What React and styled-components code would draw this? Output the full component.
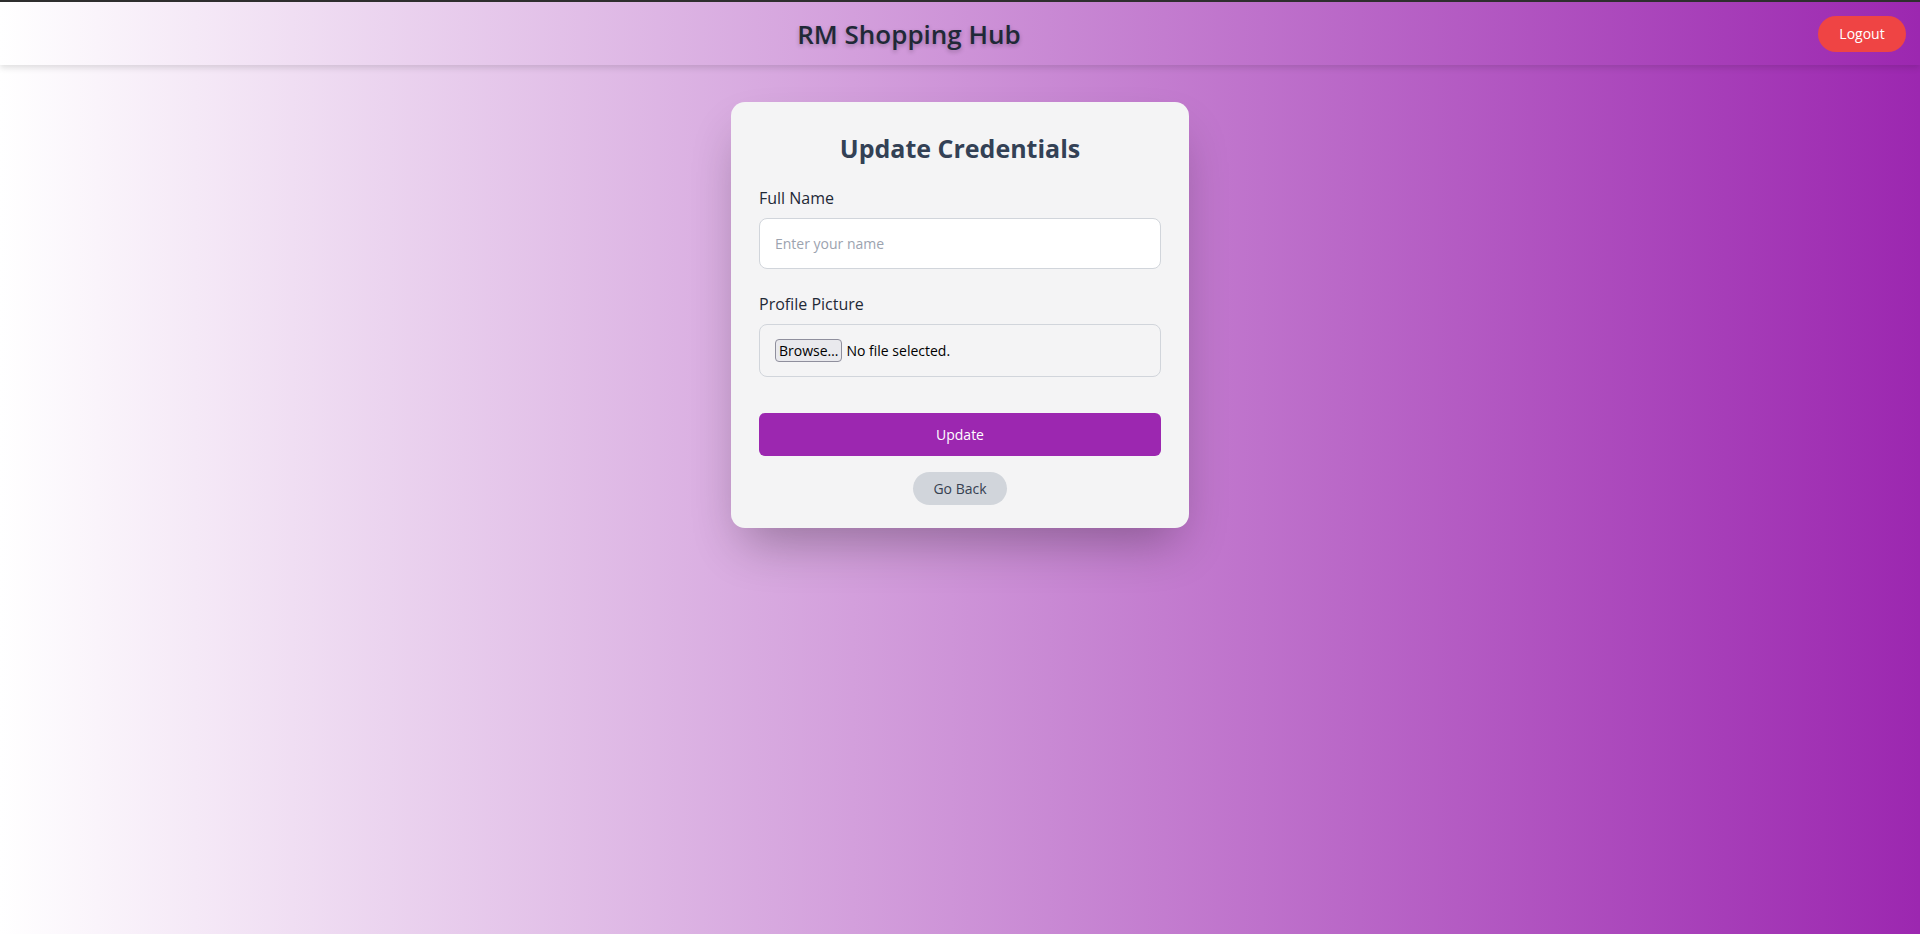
import React from "react";
import styled, { createGlobalStyle } from "styled-components";

const GlobalStyle = createGlobalStyle`
  * { box-sizing: border-box; }
  html, body { margin: 0; padding: 0; }
  body {
    min-height: 100vh;
    background: linear-gradient(to right, #ffffff, #9c27b0);
    font-family: "Open Sans", "Noto Sans", sans-serif;
    border-top: 2px solid #2e2e2e;
  }
`;

const Page = styled.div`
  min-height: calc(100vh - 2px);
  display: flex;
  flex-direction: column;
`;

const Header = styled.header`
  height: 63px;
  display: flex;
  align-items: center;
  padding: 0 14px;
  box-shadow: 0 3px 6px rgba(0, 0, 0, 0.12);
`;

const Brand = styled.h1`
  flex: 1;
  margin: 0;
  padding-right: 14px;
  text-align: center;
  font-size: 26px;
  font-weight: 600;
  color: #1f2937;
  text-shadow: 0 2px 4px rgba(0, 0, 0, 0.25);
`;

const LogoutButton = styled.button`
  width: 88px;
  height: 36px;
  border: none;
  border-radius: 9999px;
  background: #ef4444;
  color: #ffffff;
  font-family: inherit;
  font-size: 14px;
  cursor: pointer;
`;

const Main = styled.main`
  display: flex;
  justify-content: center;
  padding-top: 37px;
`;

const Card = styled.div`
  width: 458px;
  padding: 28px 28px 23px;
  background: #f4f4f5;
  border-radius: 14px;
  box-shadow: 0 25px 50px -12px rgba(0, 0, 0, 0.3);
`;

const Title = styled.h2`
  margin: 0 0 20px;
  text-align: center;
  font-size: 25px;
  line-height: 36px;
  font-weight: 700;
  color: #334155;
`;

const Field = styled.div`
  margin-bottom: ${(p) => p.$gap}px;
`;

const Label = styled.label`
  display: block;
  font-size: 16px;
  line-height: 24px;
  color: #1f2937;
  margin-bottom: 8px;
`;

const TextInput = styled.input`
  display: block;
  width: 100%;
  height: 51px;
  padding: 0 15px;
  border: 1px solid #d1d5db;
  border-radius: 8px;
  background: #ffffff;
  font-family: inherit;
  font-size: 14px;
  color: #1f2937;
  outline: none;
  &::placeholder { color: #9ca3af; }
`;

const FileBox = styled.label`
  display: flex;
  align-items: center;
  gap: 4px;
  height: 53px;
  padding: 0 15px;
  border: 1px solid #d1d5db;
  border-radius: 8px;
  background: #f4f4f5;
  font-size: 14px;
  color: #000000;
  cursor: pointer;
`;

const HiddenFile = styled.input`
  display: none;
`;

const BrowseButton = styled.span`
  display: inline-flex;
  align-items: center;
  justify-content: center;
  height: 23px;
  padding: 0 3px;
  border: 1px solid #8f8f9d;
  border-radius: 4px;
  background: #e9e9ed;
  font-size: 14px;
  color: #000000;
`;

const UpdateButton = styled.button`
  display: block;
  width: 100%;
  height: 43px;
  border: none;
  border-radius: 6px;
  background: #9c27b0;
  color: #ffffff;
  font-family: inherit;
  font-size: 14px;
  cursor: pointer;
`;

const BackRow = styled.div`
  display: flex;
  justify-content: center;
  margin-top: 16px;
`;

const BackButton = styled.button`
  width: 94px;
  height: 33px;
  border: none;
  border-radius: 9999px;
  background: #d1d5db;
  color: #374151;
  font-family: inherit;
  font-size: 14px;
  cursor: pointer;
`;

export default function App() {
  return (
    <>
      <GlobalStyle />
      <Page>
        <Header>
          <Brand>RM Shopping Hub</Brand>
          <LogoutButton>Logout</LogoutButton>
        </Header>
        <Main>
          <Card>
            <Title>Update Credentials</Title>
            <Field $gap={23}>
              <Label htmlFor="name">Full Name</Label>
              <TextInput id="name" type="text" placeholder="Enter your name" />
            </Field>
            <Field $gap={36}>
              <Label>Profile Picture</Label>
              <FileBox>
                <HiddenFile type="file" />
                <BrowseButton>Browse…</BrowseButton>
                No file selected.
              </FileBox>
            </Field>
            <UpdateButton>Update</UpdateButton>
            <BackRow>
              <BackButton>Go Back</BackButton>
            </BackRow>
          </Card>
        </Main>
      </Page>
    </>
  );
}
